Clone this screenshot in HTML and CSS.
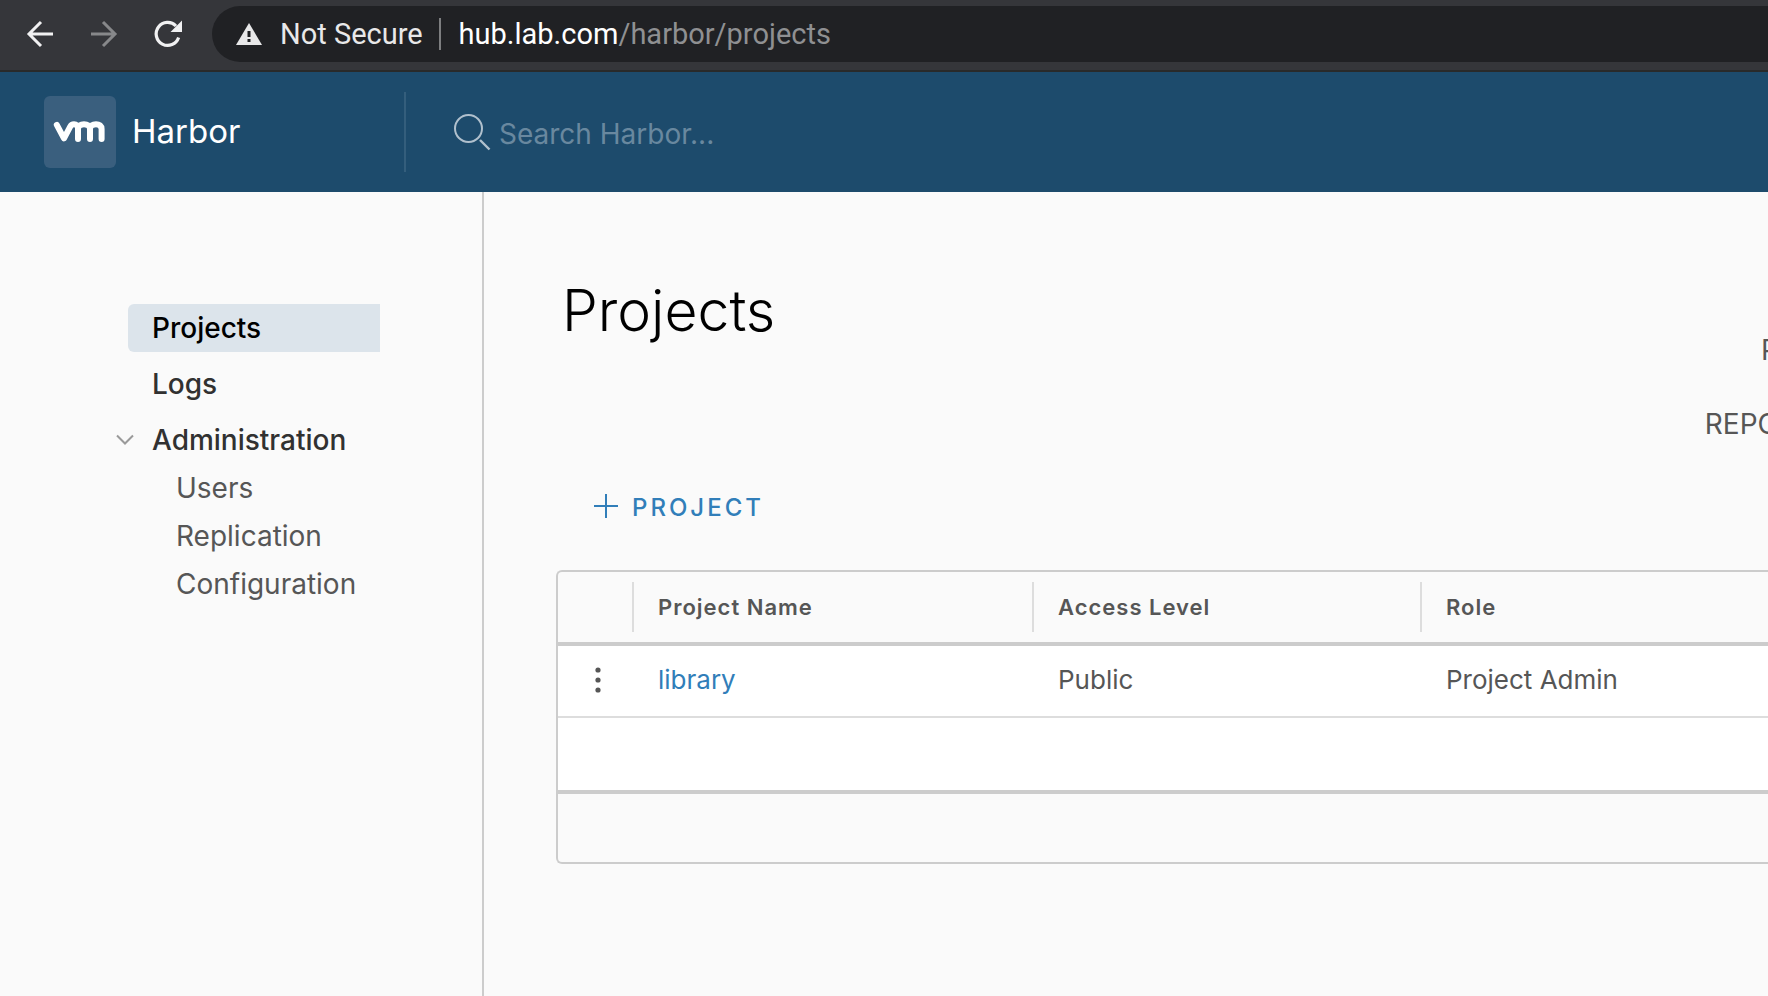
FILE: index.html
```html
<!DOCTYPE html>
<html lang="en">
<head>
<meta charset="utf-8">
<meta name="viewport" content="width=device-width, initial-scale=1">
<title>Harbor</title>
<link rel="stylesheet" href="styles.css">
</head>
<body>
<div class="browser-bar">
  <div class="browser-nav">
    <button class="nav-button" type="button" aria-label="Back">
      <svg width="32" height="32" viewBox="0 0 32 32" fill="none" stroke="#f1f1f2" stroke-width="3"><path d="M29 16H5M17 4 5 16l12 12"/></svg>
    </button>
    <button class="nav-button" type="button" aria-label="Forward">
      <svg width="32" height="32" viewBox="0 0 32 32" fill="none" stroke="#87888a" stroke-width="3"><path d="M3 16h24M15 4l12 12-12 12"/></svg>
    </button>
    <button class="nav-button" type="button" aria-label="Reload">
      <svg width="32" height="32" viewBox="0 0 32 32"><path d="M26.6 19.5A11.5 11.5 0 1 1 24 8" fill="none" stroke="#f1f1f2" stroke-width="3.2"/><path d="M30 2.5V14H18.5z" fill="#f1f1f2"/></svg>
    </button>
  </div>
  <div class="address">
    <svg width="26" height="22" viewBox="0 0 26 22"><path d="M13 0 26 22H0z" fill="#e8e8e9"/><path d="M11.5 8h3v6h-3zM11.5 16h3v3h-3z" fill="#202124"/></svg>
    <span class="security">Not Secure</span>
    <span class="url"><span class="host">hub.lab.com</span>/harbor/projects</span>
  </div>
</div>

<header class="app-header">
  <a class="brand" href="#">
    <svg class="logo" width="72" height="72" viewBox="0 0 72 72" role="img" aria-label="vm">
      <g fill="none" stroke="#fff" stroke-width="6" stroke-linecap="round" stroke-linejoin="round">
        <path d="M12.8 28.8 20 42.4l6.2-11.8c1-2 2.400-2.400 3.800-2.400 2.400 0 4 1.600 4 4V43"/>
        <path d="M34 33c0-3.200 2.600-4.800 6-4.800s6 1.600 6 4.800v10"/>
        <path d="M46 33c0-3.200 2.600-4.800 6-4.800s5.600 1.600 5.600 4.800v10"/>
      </g>
    </svg>
    <span>Harbor</span>
  </a>
  <label class="search">
    <svg width="38" height="38" viewBox="0 0 38 38" fill="none" stroke="#b0c0cd" stroke-width="2"><circle cx="15.500" cy="15.500" r="13.500"/><path d="m27 27 9.500 9.500" stroke-width="2.400"/></svg>
    <input type="text" placeholder="Search Harbor..." aria-label="Search Harbor">
  </label>
</header>

<div class="layout">
  <nav class="sidebar">
    <a class="nav-link active" href="#">Projects</a>
    <a class="nav-link" href="#">Logs</a>
    <div class="nav-group">
      <button class="group-toggle" type="button" aria-expanded="true">
        <svg width="18" height="12" viewBox="0 0 18 12" fill="none" stroke="#9a9a9a" stroke-width="2"><path d="m1 1.500 8 8 8-8"/></svg>
        Administration
      </button>
      <a class="sub-link" href="#">Users</a>
      <a class="sub-link" href="#">Replication</a>
      <a class="sub-link" href="#">Configuration</a>
    </div>
  </nav>

  <main class="content">
    <div class="page-head">
      <h1>Projects</h1>
      <div class="stats">
        <span>P</span>
        <span>REPO</span>
      </div>
    </div>
    <button class="add-project" type="button">
      <svg width="24" height="24" viewBox="0 0 24 24" stroke="#317eb9" stroke-width="2"><path d="M12 0v24M0 12h24"/></svg>
      <span>PROJECT</span>
    </button>
    <div class="datagrid">
      <table>
        <thead>
          <tr>
            <th class="col-menu" aria-label="Actions"></th>
            <th class="col-name"><div class="head-cell">Project Name</div></th>
            <th class="col-access"><div class="head-cell">Access Level</div></th>
            <th><div class="head-cell">Role</div></th>
          </tr>
        </thead>
        <tbody>
          <tr>
            <td><button class="row-menu" type="button" aria-label="Row actions"><svg width="8" height="28" viewBox="0 0 8 28" fill="#565656"><circle cx="4" cy="4" r="2.600"/><circle cx="4" cy="14" r="2.600"/><circle cx="4" cy="24" r="2.600"/></svg></button></td>
            <td class="cell"><a href="#">library</a></td>
            <td class="cell">Public</td>
            <td class="cell">Project Admin</td>
          </tr>
        </tbody>
      </table>
      <div class="grid-space"></div>
      <div class="grid-footer"></div>
    </div>
  </main>
</div>
</body>
</html>
```

FILE: styles.css
```css
* {
  box-sizing: border-box;
}

body {
  margin: 0;
  min-height: 100vh;
  display: flex;
  flex-direction: column;
  overflow-x: hidden;
  background: #fafafa;
  color: #565656;
  font-family: Inter, "Open Sans", sans-serif;
  font-size: 28px;
}

a {
  color: inherit;
  text-decoration: none;
}

button {
  padding: 0;
  border: 0;
  background: none;
  color: inherit;
  font: inherit;
  cursor: pointer;
}

svg {
  display: block;
  flex: none;
}

.browser-bar {
  display: flex;
  align-items: flex-start;
  padding: 6px 0 8px 24px;
  border-bottom: 2px solid #292a2a;
  background: #35363a;
  font-family: Roboto, sans-serif;
  font-size: 29px;
}

.browser-nav {
  display: flex;
  align-items: center;
  gap: 32px;
  width: 188px;
  height: 56px;
}

.address {
  flex: 1;
  display: flex;
  align-items: center;
  height: 56px;
  padding-left: 24px;
  border-radius: 28px 0 0 28px;
  background: #202124;
  color: #e8e8e9;
}

.security {
  margin-left: 18px;
  padding-right: 16px;
  border-right: 2px solid #7d7e80;
  line-height: 32px;
}

.url {
  padding-left: 18px;
  color: #8f9092;
}

.host {
  color: #fff;
}

.app-header {
  display: flex;
  align-items: center;
  height: 120px;
  background: #1d4b6c;
  color: #fff;
}

.brand {
  display: flex;
  align-items: center;
  gap: 16px;
  width: 406px;
  height: 80px;
  padding-left: 44px;
  border-right: 2px solid #345e7c;
  font-size: 33px;
}

.brand span {
  padding-bottom: 2px;
}

.logo {
  border-radius: 6px;
  background: #3a5f7e;
}

.search {
  flex: 1;
  display: flex;
  align-items: center;
  gap: 8px;
  padding-left: 47px;
}

.search input {
  flex: 1;
  min-width: 0;
  padding: 4px 0 0;
  border: 0;
  outline: 0;
  background: none;
  color: #fff;
  font: inherit;
}

.search input::placeholder {
  color: #69889f;
  opacity: 1;
}

.layout {
  flex: 1;
  display: flex;
}

.sidebar {
  flex: none;
  display: flex;
  flex-direction: column;
  gap: 8px;
  width: 484px;
  padding: 112px 102px 0 116px;
  border-right: 2px solid #ccc;
  line-height: 48px;
}

.nav-link {
  margin-left: 12px;
  padding-left: 24px;
  color: #313131;
  font-weight: 500;
}

.active {
  border-radius: 6px 0 0 6px;
  background: #dce4eb;
  color: #000;
}

.nav-group {
  display: flex;
  flex-direction: column;
}

.group-toggle {
  display: flex;
  align-items: center;
  gap: 18px;
  color: #313131;
  font-weight: 500;
  line-height: 48px;
}

.sub-link {
  padding-left: 60px;
}

.content {
  flex: 1;
  min-width: 0;
  padding: 84px 0 0 72px;
}

.page-head {
  display: flex;
  justify-content: space-between;
  padding-left: 6px;
}

h1 {
  margin: 0;
  color: #000;
  font-size: 57px;
  font-weight: 300;
  line-height: 70px;
}

.stats {
  display: flex;
  flex-direction: column;
  align-items: flex-end;
  gap: 26px;
  margin-right: -11px;
  padding-top: 50px;
  line-height: 48px;
}

.add-project {
  display: flex;
  align-items: center;
  gap: 14px;
  margin: 34px 0 40px 38px;
  color: #317eb9;
  font-size: 24px;
  font-weight: 500;
  letter-spacing: 3px;
  line-height: 44px;
}

.add-project span {
  padding-top: 4px;
}

.datagrid {
  border: 2px solid #ccc;
  border-right: 0;
  border-radius: 6px 0 0 6px;
}

table {
  width: 100%;
  border-collapse: separate;
  border-spacing: 0;
  table-layout: fixed;
  text-align: left;
}

.col-menu {
  width: 74px;
}

.col-name {
  width: 400px;
}

.col-access {
  width: 388px;
}

th {
  padding: 10px 0;
  border-bottom: 4px solid #ccc;
}

.head-cell {
  padding-left: 24px;
  border-left: 2px solid #ddd;
  font-size: 22px;
  font-weight: 600;
  letter-spacing: 1px;
  line-height: 50px;
}

td {
  height: 72px;
  padding: 0 0 2px;
  border-bottom: 2px solid #ddd;
  background: #fff;
}

.cell {
  padding: 0 0 4px 26px;
  font-size: 26px;
}

.cell a {
  color: #317eb9;
}

.row-menu {
  display: block;
  margin-left: 36px;
}

.grid-space {
  height: 76px;
  border-bottom: 4px solid #ccc;
  background: #fff;
}

.grid-footer {
  height: 68px;
}
```
